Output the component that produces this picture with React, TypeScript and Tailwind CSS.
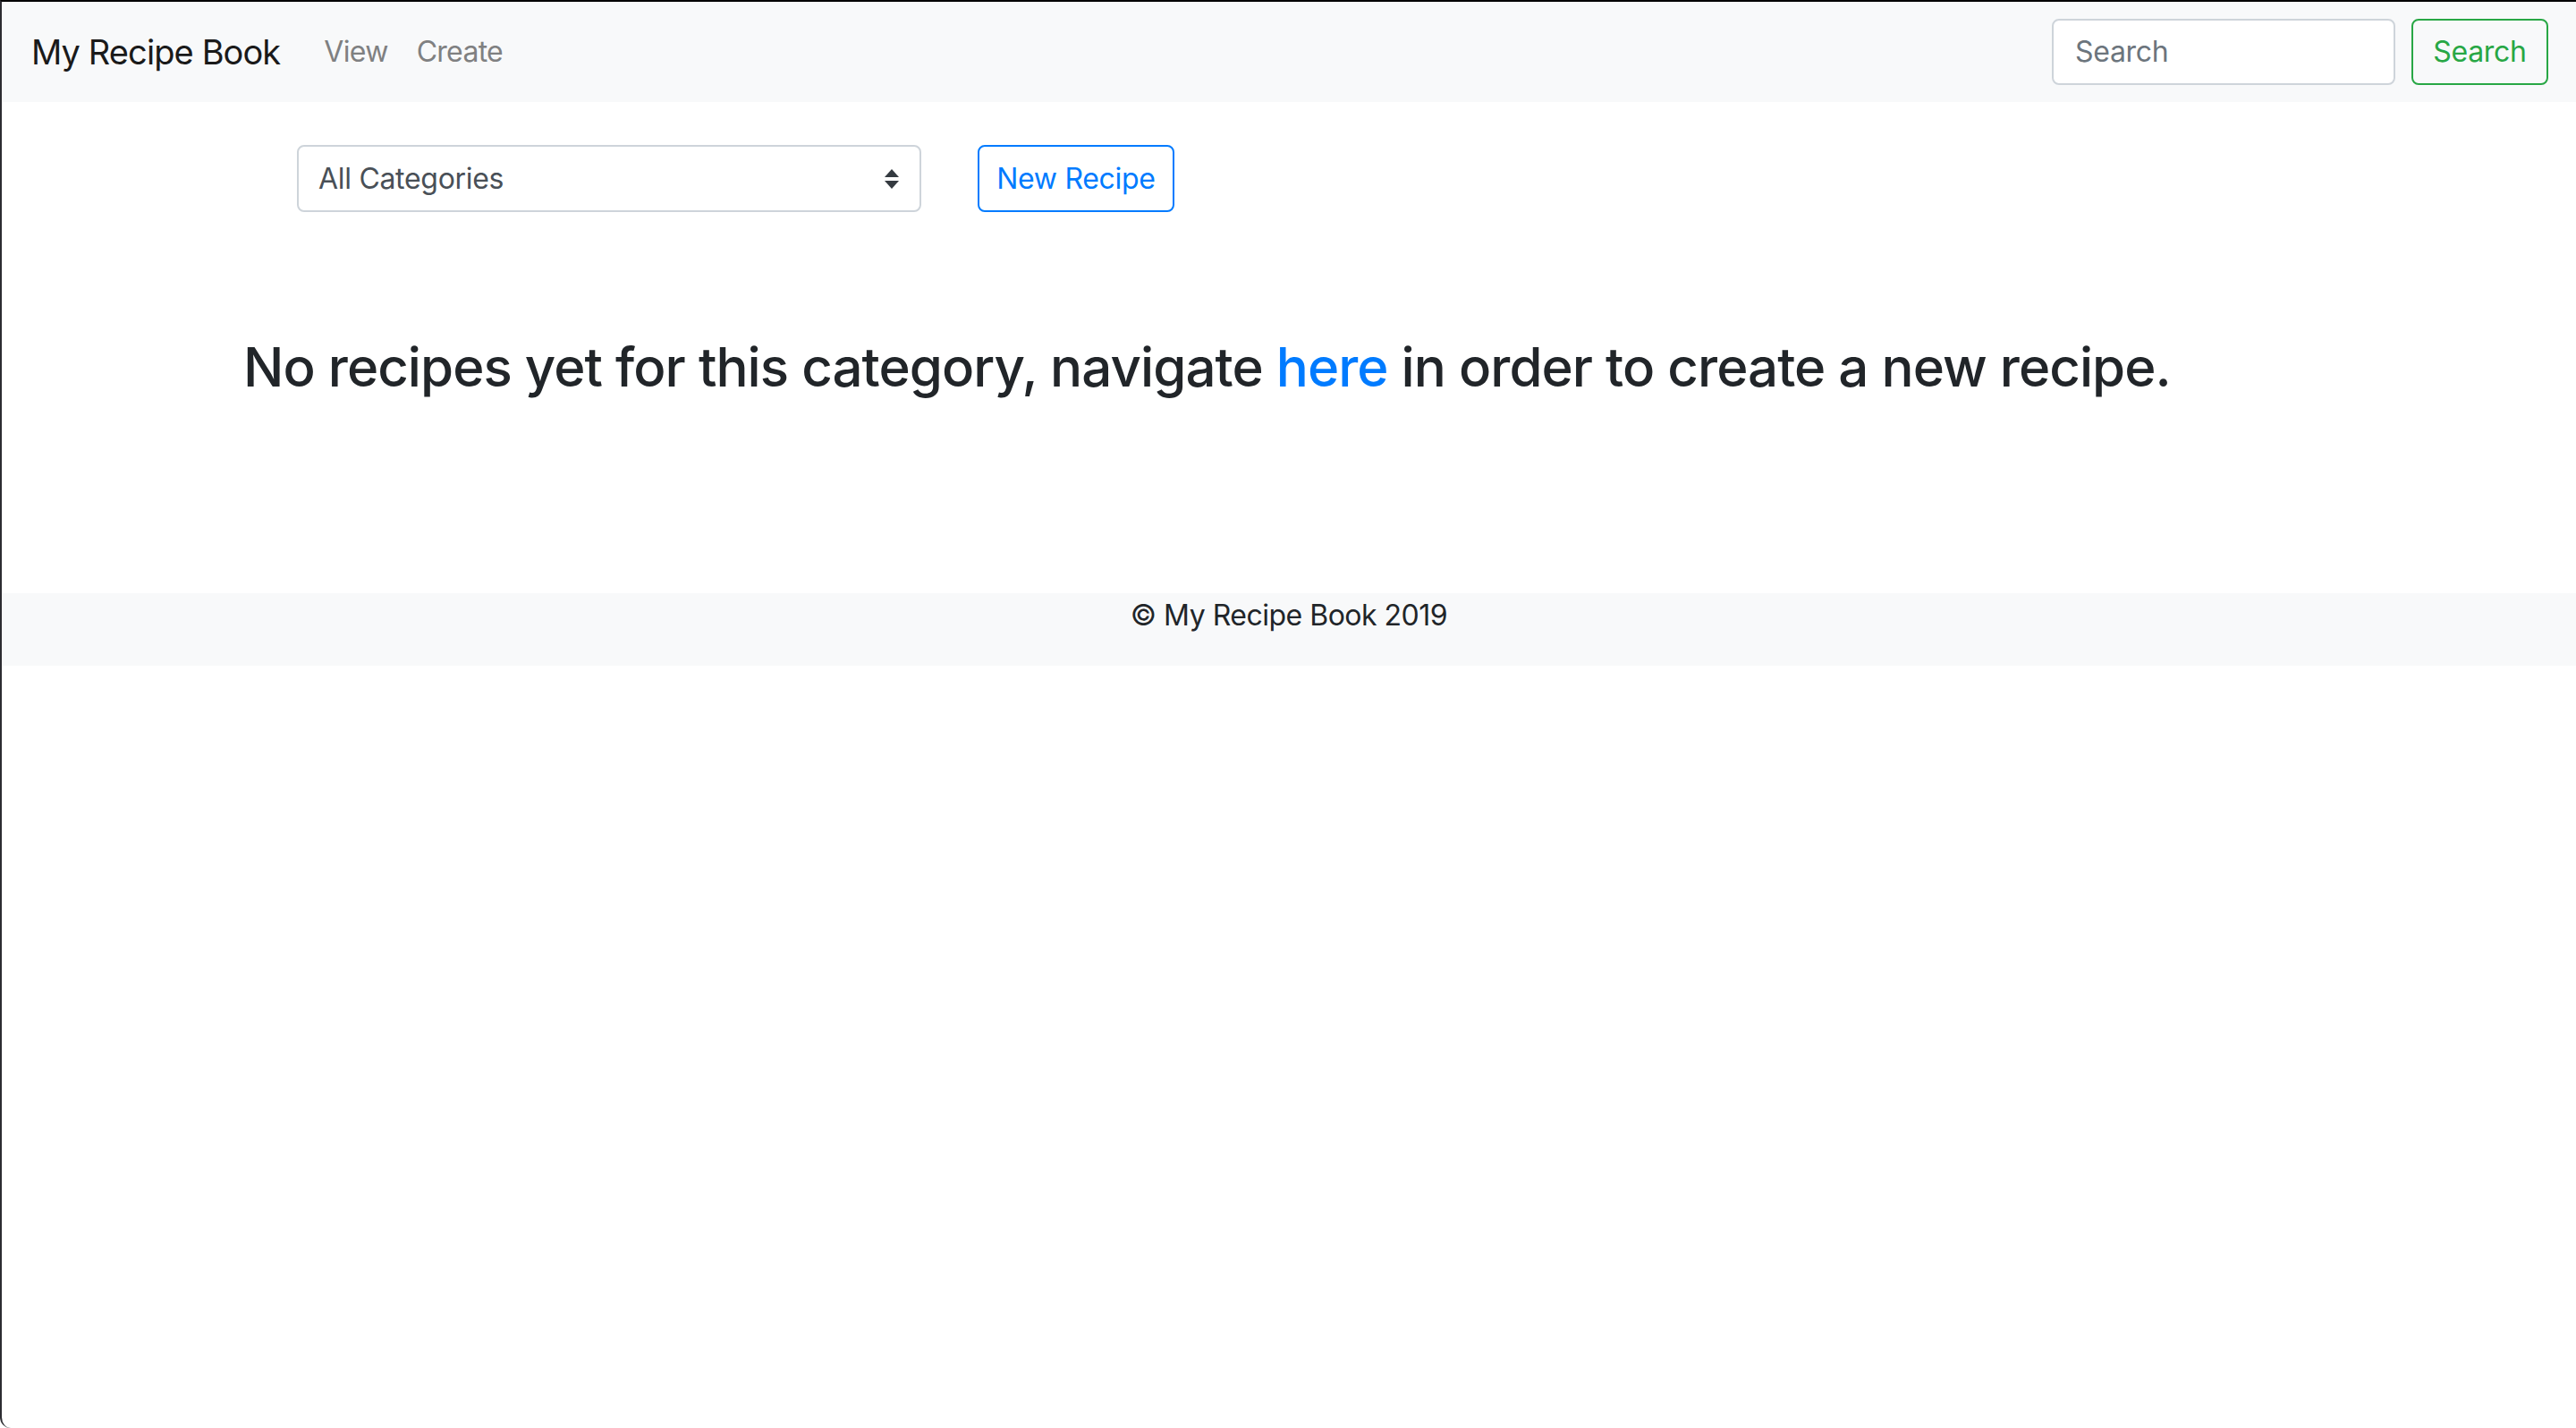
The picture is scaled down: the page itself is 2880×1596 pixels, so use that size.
import React from "react"

const font = { fontFamily: "Inter, 'Noto Sans', 'Liberation Sans', sans-serif" }

function SortArrows() {
  return (
    <svg width="16" height="22" viewBox="0 0 16 22" className="shrink-0">
      <path d="M8 0 L16 9 L0 9 Z" fill="#343a40" />
      <path d="M0 13 L16 13 L8 22 Z" fill="#343a40" />
    </svg>
  )
}

function Navbar() {
  return (
    <nav className="h-[112px] bg-[#f8f9fa] flex items-center pl-[33px] pr-[31px]">
      <a className="text-[38px] text-[#1a1a1a] tracking-[-0.9px] mr-[49px]">My Recipe Book</a>
      <div className="flex items-center text-[32px] text-[#7f8081] tracking-[-0.7px]">
        <a className="pr-[16px]">View</a>
        <a className="px-[16px]">Create</a>
      </div>
      <div className="ml-auto flex items-center gap-[18px]">
        <div className="w-[384px] h-[74px] bg-white border-2 border-[#ced4da] rounded-[8px] flex items-center px-[24px] text-[32px] text-[#6c757d] tracking-[-0.3px]">
          Search
        </div>
        <button className="w-[153px] h-[74px] border-2 border-[#28a745] rounded-[8px] text-[32px] text-[#28a745] tracking-[-0.3px]">
          Search
        </button>
      </div>
    </nav>
  )
}

export default function App() {
  return (
    <div
      className="h-[1596px] bg-white border-t-2 border-t-black border-l-2 border-l-[#2c2c31] rounded-bl-[12px] overflow-hidden"
      style={font}
    >
      <Navbar />

      <div className="pt-[48px] pl-[330px] flex items-center gap-[63px]">
        <div className="w-[698px] h-[75px] border-2 border-[#ced4da] rounded-[8px] flex items-center justify-between pl-[22px] pr-[23px] text-[32px] text-[#495057] tracking-[-0.3px]">
          <span>All Categories</span>
          <SortArrows />
        </div>
        <button className="w-[220px] h-[75px] border-2 border-[#007bff] rounded-[8px] text-[32px] text-[#007bff] tracking-[-0.3px]">
          New Recipe
        </button>
      </div>

      <h2 className="mt-[137px] pl-[270px] text-[60px] leading-[72px] font-medium text-[#212529] tracking-[-0.95px]">
        No recipes yet for this category, navigate <a className="text-[#007bff]">here</a> in order to create a new recipe.
      </h2>

      <footer className="mt-[217px] h-[81px] bg-[#f8f9fa] flex justify-center pt-[1px] text-[32px] leading-[48px] text-[#212529] tracking-[-0.5px]">
        © My Recipe Book 2019
      </footer>
    </div>
  )
}
